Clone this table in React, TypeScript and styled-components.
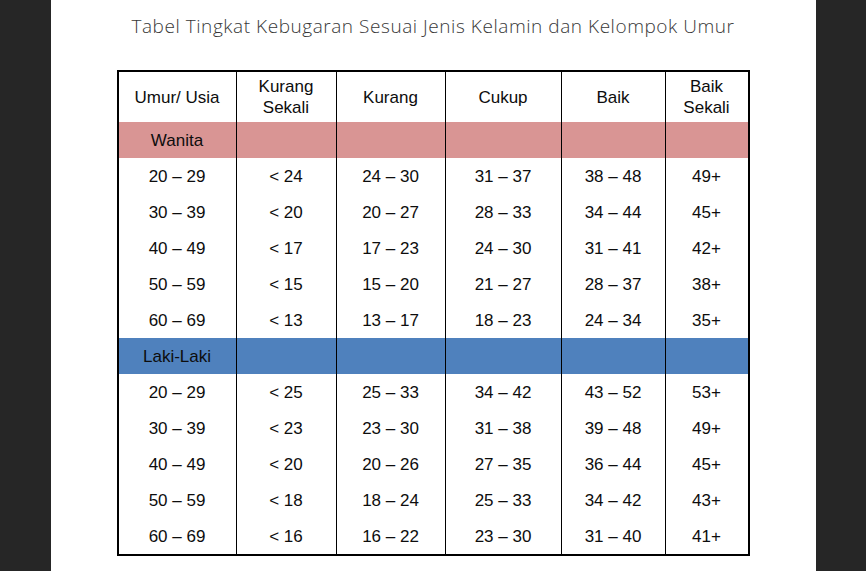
import React from "react";
import styled, { createGlobalStyle } from "styled-components";

const Global = createGlobalStyle`
  html, body { margin: 0; padding: 0; background: #262626; }
  body { font-family: "Liberation Sans", Arial, sans-serif; }
`;

const Screen = styled.div`
  display: flex;
  justify-content: center;
  width: 866px;
  height: 571px;
  background: #262626;
  overflow: hidden;
`;

const Page = styled.div`
  width: 765px;
  height: 571px;
  background: #ffffff;
  display: flex;
  flex-direction: column;
  align-items: center;
`;

const Title = styled.h1`
  margin: 14px 0 0;
  font-family: "Open Sans", "Noto Sans", sans-serif;
  font-weight: 300;
  font-size: 19px;
  line-height: 24px;
  color: #383838;
  letter-spacing: 0.55px;
  white-space: nowrap;
`;

const Table = styled.div`
  margin-top: 32px;
  width: 633px;
  box-sizing: border-box;
  border: 2px solid #000;
  display: grid;
  grid-template-columns: 117px 100px 109px 116px 104px 83px;
`;

const Cell = styled.div<{ $h: number; $bg?: string; $first?: boolean }>`
  height: ${(p) => p.$h}px;
  box-sizing: border-box;
  border-left: ${(p) => (p.$first ? "none" : "1px solid #000")};
  background: ${(p) => p.$bg || "#fff"};
  display: flex;
  align-items: center;
  justify-content: center;
  text-align: center;
  font-family: "Liberation Sans", Arial, sans-serif;
  font-size: 17px;
  line-height: 21px;
  color: #0d0d0d;
`;

const HeaderText = styled.span`
  white-space: pre-line;
`;

const headers = ["Umur/ Usia", "Kurang\nSekali", "Kurang", "Cukup", "Baik", "Baik\nSekali"];

const wanita = [
  ["20 – 29", "< 24", "24 – 30", "31 – 37", "38 – 48", "49+"],
  ["30 – 39", "< 20", "20 – 27", "28 – 33", "34 – 44", "45+"],
  ["40 – 49", "< 17", "17 – 23", "24 – 30", "31 – 41", "42+"],
  ["50 – 59", "< 15", "15 – 20", "21 – 27", "28 – 37", "38+"],
  ["60 – 69", "< 13", "13 – 17", "18 – 23", "24 – 34", "35+"],
];

const laki = [
  ["20 – 29", "< 25", "25 – 33", "34 – 42", "43 – 52", "53+"],
  ["30 – 39", "< 23", "23 – 30", "31 – 38", "39 – 48", "49+"],
  ["40 – 49", "< 20", "20 – 26", "27 – 35", "36 – 44", "45+"],
  ["50 – 59", "< 18", "18 – 24", "25 – 33", "34 – 42", "43+"],
  ["60 – 69", "< 16", "16 – 22", "23 – 30", "31 – 40", "41+"],
];

const GroupRow = ({ label, bg }: { label: string; bg: string }) => (
  <>
    {headers.map((_, i) => (
      <Cell key={i} $h={36} $bg={bg} $first={i === 0}>
        {i === 0 ? label : ""}
      </Cell>
    ))}
  </>
);

const DataRows = ({ rows }: { rows: string[][] }) => (
  <>
    {rows.map((r, ri) =>
      r.map((v, i) => (
        <Cell key={`${ri}-${i}`} $h={36} $first={i === 0}>
          {v}
        </Cell>
      ))
    )}
  </>
);

export default function App() {
  return (
    <>
      <Global />
      <Screen>
        <Page>
          <Title>Tabel Tingkat Kebugaran Sesuai Jenis Kelamin dan Kelompok Umur</Title>
          <Table>
            {headers.map((h, i) => (
              <Cell key={h} $h={50} $first={i === 0}>
                <HeaderText>{h}</HeaderText>
              </Cell>
            ))}
            <GroupRow label="Wanita" bg="#d99594" />
            <DataRows rows={wanita} />
            <GroupRow label="Laki-Laki" bg="#4f81bd" />
            <DataRows rows={laki} />
          </Table>
        </Page>
      </Screen>
    </>
  );
}
